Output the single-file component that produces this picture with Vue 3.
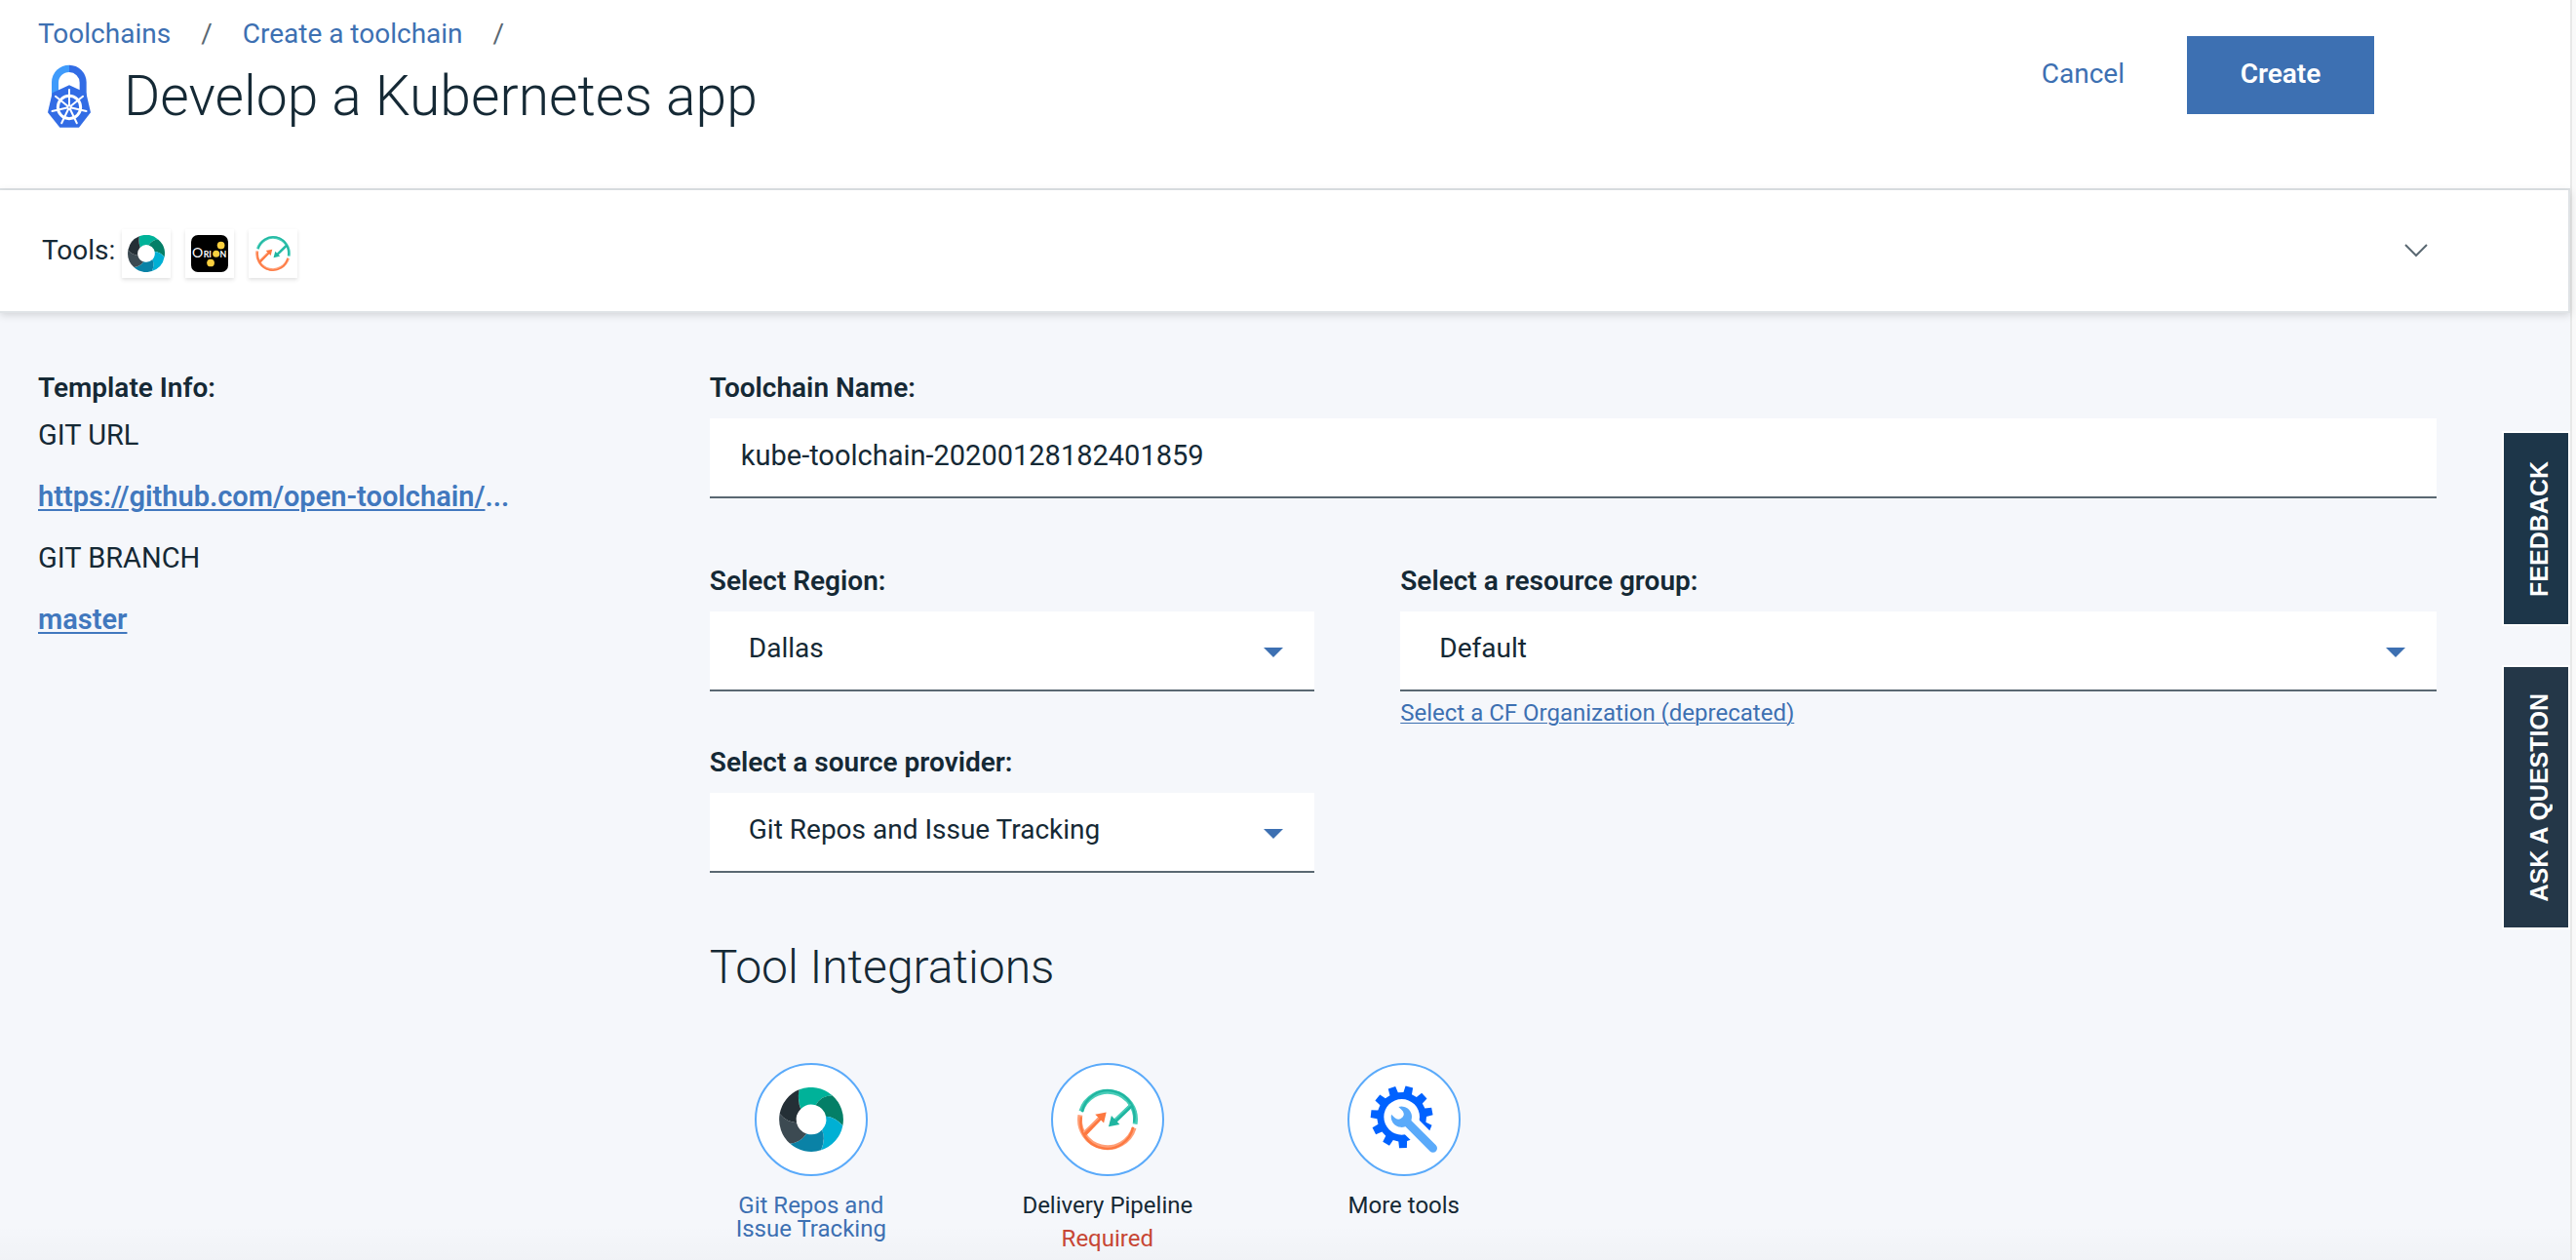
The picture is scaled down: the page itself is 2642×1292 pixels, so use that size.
<script setup>
import { ref } from 'vue'

const name = ref('kube-toolchain-20200128182401859')
const region = ref('Dallas')
const group = ref('Default')
const provider = ref('Git Repos and Issue Tracking')

const ring = [
  { fill: '#00b299', d: 'M-38-94A101 101 0 0 1 66-76Q30-76 14-45A47 47 0 0 0-33-33Q-44-60-38-94Z' },
  { fill: '#047f67', d: 'M66-76A101 101 0 0 1 99 19Q76-8 46-10A47 47 0 0 0 14-45Q30-76 66-76Z' },
  { fill: '#00b0d4', d: 'M99 19A101 101 0 0 1 31 96Q46 62 34 32A47 47 0 0 0 46-10Q76-8 99 19Z' },
  { fill: '#0a82a6', d: 'M31 96A101 101 0 0 1-67 75Q-34 72-15 44A47 47 0 0 0 34 32Q46 62 31 96Z' },
  { fill: '#3c4a52', d: 'M-67 75A101 101 0 0 1-99-18Q-78 8-46 10A47 47 0 0 0-15 44Q-34 72-67 75Z' },
  { fill: '#242f36', d: 'M-99-18A101 101 0 0 1-38-94Q-44-60-33-33A47 47 0 0 0-46 10Q-78 8-99-18Z' }
]

const polar = (r, deg) => {
  const a = (deg * Math.PI) / 180
  return `${(r * Math.cos(a)).toFixed(1)} ${(r * Math.sin(a)).toFixed(1)}`
}

const teeth = 11
const gear = 'M' + Array.from({ length: teeth }, (_, i) => {
  const a = -76 + (i * 360) / teeth
  return [polar(76, a - 10), polar(96, a - 7), polar(96, a + 7), polar(76, a + 10)].join('L')
}).join('L') + 'ZM55 0A55 55 0 1 0-55 0A55 55 0 1 0 55 0Z'

const spokes = Array.from({ length: 7 }, (_, i) => `M0 0L${polar(54, -90 + (i * 360) / 7)}`).join('')
</script>

<template>
  <div class="page">
    <header class="header">
      <div>
        <nav class="crumbs" aria-label="Breadcrumb">
          <a href="#">Toolchains</a><span>/</span><a href="#">Create a toolchain</a><span>/</span>
        </nav>
        <div class="title">
          <svg class="title-icon" viewBox="51 28 144 216" aria-hidden="true">
            <path d="M69 140V92A54 53 0 0 1 123 39V61A33 32 0 0 0 90 93V140Z" fill="#3f9bfb" />
            <path d="M123 39A54 53 0 0 1 176 92V140H155V93A33 32 0 0 0 123 61Z" fill="#326ce5" />
            <path d="M123 101L175 125L189 185L153 231H94L57 185L71 125Z" fill="#326ce5" />
            <g transform="translate(123 169)" fill="none" stroke="#fff">
              <circle r="35" stroke-width="9" />
              <path :d="spokes" stroke-width="6" stroke-linecap="round" />
              <circle r="5" fill="#326ce5" stroke-width="5" />
            </g>
          </svg>
          <h1>Develop a Kubernetes app</h1>
        </div>
      </div>
      <div class="actions">
        <button type="button" class="cancel">Cancel</button>
        <button type="button" class="create">Create</button>
      </div>
    </header>

    <section class="tools">
      <span class="tools-label">Tools:</span>
      <ul class="tiles">
        <li>
          <svg viewBox="-101 -101 202 202" role="img" aria-label="Git">
            <path v-for="s in ring" :key="s.fill" :d="s.d" :fill="s.fill" />
          </svg>
        </li>
        <li>
          <svg viewBox="0 0 108 108" class="orion">
            <rect width="108" height="108" rx="20" fill="#000" />
            <text x="3" y="66" font-size="40">O</text>
            <text x="36" y="65" font-size="25" font-weight="700">RI</text>
            <text x="84" y="65" font-size="25" font-weight="700">N</text>
            <g fill="#fbd03f">
              <circle cx="87" cy="30" r="11" />
              <circle cx="73" cy="55" r="10" />
              <circle cx="57" cy="81" r="11" />
            </g>
          </svg>
        </li>
        <li>
          <svg viewBox="-101 -101 202 202" role="img" aria-label="Pipeline">
            <use href="#pipeline" />
          </svg>
        </li>
      </ul>
      <button type="button" class="expand" aria-label="Expand tools">
        <svg viewBox="0 0 24 14"><path d="M1 1L12 12L23 1" fill="none" stroke="#5a6872" stroke-width="2" /></svg>
      </button>
    </section>

    <main class="content">
      <aside class="info">
        <h2>Template Info:</h2>
        <dl>
          <dt>GIT URL</dt>
          <dd><a href="#">https://github.com/open-toolchain/</a><span>...</span></dd>
          <dt>GIT BRANCH</dt>
          <dd><a href="#">master</a></dd>
        </dl>
      </aside>

      <form class="form" @submit.prevent>
        <div class="field wide">
          <label for="name">Toolchain Name:</label>
          <input id="name" v-model="name" type="text" class="control" />
        </div>
        <div class="field">
          <label for="region">Select Region:</label>
          <div class="select">
            <select id="region" v-model="region" class="control"><option>Dallas</option></select>
            <svg viewBox="0 0 20 10"><path d="M0 0H20L10 10Z" /></svg>
          </div>
        </div>
        <div class="field">
          <label for="group">Select a resource group:</label>
          <div class="select">
            <select id="group" v-model="group" class="control"><option>Default</option></select>
            <svg viewBox="0 0 20 10"><path d="M0 0H20L10 10Z" /></svg>
          </div>
          <a href="#" class="org">Select a CF Organization (deprecated)</a>
        </div>
        <div class="field source">
          <label for="provider">Select a source provider:</label>
          <div class="select">
            <select id="provider" v-model="provider" class="control"><option>Git Repos and Issue Tracking</option></select>
            <svg viewBox="0 0 20 10"><path d="M0 0H20L10 10Z" /></svg>
          </div>
        </div>

        <section class="wide">
          <h2 class="heading">Tool Integrations</h2>
          <div class="integrations">
            <button type="button" class="integration active">
              <span class="disc">
                <svg width="66" height="66" viewBox="-101 -101 202 202">
                  <path v-for="s in ring" :key="s.fill" :d="s.d" :fill="s.fill" />
                </svg>
              </span>
              <span class="name">Git Repos and<br />Issue Tracking</span>
            </button>
            <button type="button" class="integration">
              <span class="disc">
                <svg width="66" height="66" viewBox="-101 -101 202 202">
                  <g id="pipeline" fill="none">
                    <path d="M-83-26A87 87 0 0 1 86 14" stroke="#48cdb8" stroke-width="15" />
                    <path d="M-80-24A83 83 0 0 1 83 8" stroke="#1fb5a0" stroke-width="7" />
                    <path d="M83 26A87 87 0 0 1-86-14" stroke="#ffa078" stroke-width="15" />
                    <path d="M80 24A83 83 0 0 1-83-8" stroke="#fd7840" stroke-width="7" />
                    <path d="M76-46L22 6" stroke="#1fb5a0" stroke-width="13" />
                    <path d="M72-48L20 2" stroke="#48cdb8" stroke-width="5" />
                    <path d="M3 22L12-12L38 15Z" fill="#1fb5a0" />
                    <path d="M-72 46L-22-6" stroke="#fd7840" stroke-width="13" />
                    <path d="M-76 40L-24-9" stroke="#ffa078" stroke-width="5" />
                    <path d="M-4-23L-12 11L-39-16Z" fill="#fd7840" />
                  </g>
                </svg>
              </span>
              <span class="name">Delivery Pipeline</span>
              <span class="required">Required</span>
            </button>
            <button type="button" class="integration">
              <span class="disc">
                <svg width="74" height="74" viewBox="-104 -103 222 222">
                  <path :d="gear" fill="#0062ff" fill-rule="evenodd" />
                  <path d="M0 0L100 100" stroke="#fff" stroke-width="62" />
                  <path d="M14 14L96 96" stroke="#5aaafa" stroke-width="26" stroke-linecap="round" />
                  <path d="M-10-31A32 32 0 1 1-32-8L-22 2Q-13 10-3 5Q11-4 4-17Q0-22-10-31Z" fill="#5aaafa" />
                </svg>
              </span>
              <span class="name">More tools</span>
            </button>
          </div>
        </section>
      </form>
    </main>

    <div class="side-tabs">
      <button type="button" class="feedback"><span>FEEDBACK</span></button>
      <button type="button" class="ask"><span>ASK A QUESTION</span></button>
    </div>
  </div>
</template>

<style>
body {
  margin: 0;
  background: #f9f9f9;
}
</style>

<style scoped>
.page {
  position: relative;
  display: flex;
  flex-direction: column;
  box-sizing: border-box;
  min-height: 100vh;
  margin-right: 4px;
  border-right: 2px solid #e8e8e8;
  background: #f5f7fb;
  color: #152935;
  font-family: Roboto, 'Liberation Sans', sans-serif;
  font-size: 28px;
  line-height: 36px;
}

a {
  color: #3d70b2;
}

button {
  padding: 0;
  border: 0;
  background: none;
  color: inherit;
  font: inherit;
  cursor: pointer;
}

svg {
  display: block;
}

h1,
h2,
dl,
dd,
ul {
  margin: 0;
  padding: 0;
}

.header {
  display: flex;
  justify-content: space-between;
  align-items: flex-start;
  padding: 17px 201px 58px 39px;
  border-bottom: 2px solid #dfe3e6;
  background: #fff;
}

.crumbs {
  display: flex;
}

.crumbs a {
  text-decoration: none;
}

.crumbs span {
  margin: 0 31px;
  color: #5a6872;
}

.title {
  display: flex;
  align-items: center;
  gap: 32px;
  margin: 10px 0 0 8px;
}

.title-icon {
  width: 48px;
  height: 72px;
}

h1 {
  font-size: 57px;
  font-weight: 300;
  line-height: 68px;
}

.actions {
  display: flex;
  align-items: center;
  gap: 64px;
  margin-top: 20px;
}

.cancel,
.create {
  padding-bottom: 2px;
}

.cancel {
  color: #3d70b2;
}

.create {
  width: 192px;
  height: 80px;
  background: #3d70b2;
  color: #fff;
  font-weight: 600;
}

.tools {
  position: relative;
  display: flex;
  align-items: center;
  padding: 34px 144px 34px 43px;
  border: solid #dfe3e6;
  border-width: 0 2px 2px 0;
  background: #fff;
  box-shadow: 0 2px 8px rgba(0, 0, 0, 0.15);
}

.tiles {
  display: flex;
  gap: 15px;
  margin-left: 7px;
  padding-top: 6px;
  list-style: none;
}

.tiles li {
  padding: 6px;
  background: #fff;
  box-shadow: 0 2px 4px rgba(0, 0, 0, 0.12);
}

.tiles svg {
  width: 38px;
  height: 38px;
}

.orion {
  fill: #fff;
  font-family: Lato, sans-serif;
}

.expand {
  margin-left: auto;
}

.expand svg {
  width: 24px;
  height: 14px;
}

.content {
  display: flex;
  flex: 1;
  align-items: flex-start;
  padding: 59px 137px 10px 39px;
  background: linear-gradient(rgba(0, 0, 0, 0), rgba(0, 0, 0, 0.02)) bottom / 100% 36px no-repeat;
}

.info {
  flex: 0 0 28%;
}

.info h2 {
  font-size: 28px;
  font-weight: 600;
  line-height: 36px;
}

.info dl {
  margin-top: 12px;
  font-size: 29px;
}

.info dt,
.info dd {
  margin-bottom: 27px;
}

.info dd {
  color: #4178be;
  font-weight: 600;
}

.info a {
  color: #4178be;
  text-decoration-thickness: 2px;
  text-underline-offset: 3px;
}

.form {
  display: grid;
  flex: 1;
  grid-template-columns: 35fr 60fr;
  column-gap: 5%;
  row-gap: 67px;
}

.wide {
  grid-column: 1 / -1;
}

.field {
  display: flex;
  flex-direction: column;
  gap: 13px;
}

.source {
  margin-top: -50px;
}

label {
  font-weight: 600;
}

.control {
  box-sizing: border-box;
  display: block;
  width: 100%;
  height: 82px;
  padding: 0 80px 5px 40px;
  border: 0;
  border-bottom: 2px solid #5a6872;
  border-radius: 0;
  background: #fff;
  color: inherit;
  font: inherit;
  appearance: none;
}

input.control {
  padding: 0 32px 5px;
  font-size: 29px;
}

.select {
  position: relative;
}

.select svg {
  position: absolute;
  top: 37px;
  right: 32px;
  width: 20px;
  height: 10px;
  fill: #3d70b2;
  pointer-events: none;
}

.org {
  align-self: flex-start;
  margin-top: -7px;
  font-size: 24px;
  line-height: 32px;
  text-underline-offset: 2px;
  text-decoration-thickness: 1px;
}

.heading {
  font-size: 48px;
  font-weight: 300;
  line-height: 60px;
}

.integrations {
  display: flex;
  gap: 96px;
  margin-top: 68px;
}

.integration {
  display: flex;
  flex-direction: column;
  align-items: center;
  width: 208px;
  font-size: 24px;
  line-height: 24px;
}

.disc {
  display: flex;
  align-items: center;
  justify-content: center;
  box-sizing: border-box;
  width: 116px;
  height: 116px;
  margin-bottom: 18px;
  border: 2px solid #5aaafa;
  border-radius: 50%;
  background: #fff;
}

.active .name {
  color: #3d70b2;
}

.required {
  margin-top: 10px;
  color: #c74634;
}

.side-tabs {
  position: absolute;
  top: 442px;
  right: 0;
  display: flex;
  flex-direction: column;
  gap: 40px;
}

.side-tabs button {
  display: flex;
  align-items: center;
  justify-content: center;
  box-sizing: border-box;
  width: 70px;
  height: 200px;
  padding-left: 5px;
  border: 2px solid #fff;
  background: #1d3649;
  color: #fff;
  font-family: 'Liberation Sans', sans-serif;
  font-size: 25px;
  font-weight: 700;
}

.side-tabs .ask {
  height: 271px;
  background: #243748;
}

.side-tabs span {
  writing-mode: vertical-rl;
  transform: rotate(180deg);
}
</style>
